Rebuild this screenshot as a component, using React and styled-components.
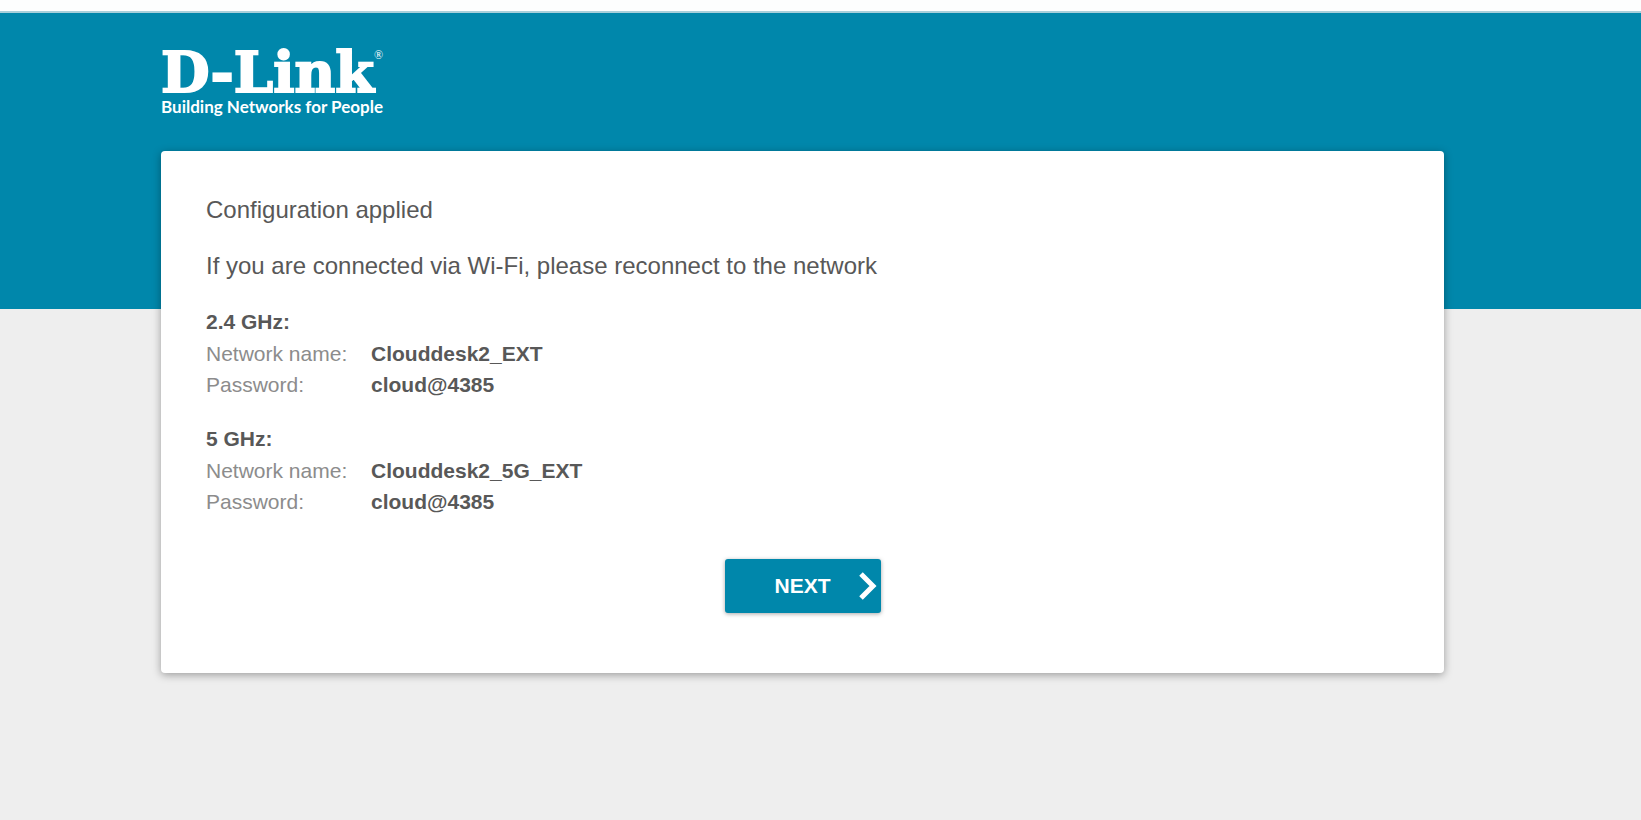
import React from "react";
import styled, { createGlobalStyle } from "styled-components";

const GlobalStyle = createGlobalStyle`
  *, *::before, *::after { box-sizing: border-box; }
  body {
    margin: 0;
    background: #eeeeee;
    color: #585858;
    font-family: "Liberation Sans", Arial, sans-serif;
  }
`;

const Page = styled.div`
  min-height: 100vh;
  border-top: 11px solid #fdfefe;
  background: linear-gradient(#0087ab, #0087ab) top / 100% 298px no-repeat #eeeeee;
`;

const Edge = styled.div`
  height: 2px;
  background: #a9d0db;
`;

const Content = styled.div`
  padding: 34px 197px 0 161px;
`;

const Header = styled.header`
  height: 104px;
`;

const Logo = styled.a`
  display: inline-flex;
  flex-direction: column;
  color: #ffffff;
  text-decoration: none;
  white-space: nowrap;
`;

const Wordmark = styled.span`
  display: flex;
  align-items: flex-start;
  height: 50px;
  font: bold 56px/50px "DejaVu Serif", serif;
  -webkit-text-stroke: 2px #ffffff;
`;

const Registered = styled.sup`
  font: 12px/16px "Liberation Serif", serif;
  -webkit-text-stroke: 0;
`;

const Tagline = styled.span`
  font: bold 17px/20px Lato, "Open Sans", sans-serif;
`;

const Card = styled.main`
  padding: 43px 45px 60px;
  background: #ffffff;
  border-radius: 4px;
  box-shadow: 0 2px 8px rgba(0, 0, 0, 0.35);
`;

const Message = styled.p`
  margin: 0 0 24px;
  font-size: 24px;
  line-height: 32px;
`;

const Network = styled.section`
  margin-bottom: 23px;
  font-size: 21px;
`;

const Band = styled.h2`
  margin: 0;
  font-size: 21px;
  line-height: 32px;
`;

const Details = styled.dl`
  display: grid;
  grid-template-columns: 165px 1fr;
  margin: 0;
  line-height: 31px;
`;

const Term = styled.dt`
  color: #8c8c8c;
`;

const Value = styled.dd`
  margin: 0;
  font-weight: bold;
`;

const Actions = styled.div`
  display: flex;
  justify-content: center;
  padding-top: 19px;
`;

const NextButton = styled.button`
  display: grid;
  grid-template-columns: 1fr auto 1fr;
  align-items: center;
  width: 156px;
  height: 54px;
  padding: 0 4px;
  border: 0;
  border-radius: 3px;
  background: #0087ab;
  box-shadow: 0 1px 4px rgba(0, 0, 0, 0.35);
  color: #ffffff;
  font: bold 21px/24px "Liberation Sans", Arial, sans-serif;
  cursor: pointer;
`;

const Label = styled.span`
  grid-column: 2;
`;

const Chevron = styled.svg`
  justify-self: end;
`;

const networks = [
  { band: "2.4 GHz:", name: "Clouddesk2_EXT", password: "cloud@4385" },
  { band: "5 GHz:", name: "Clouddesk2_5G_EXT", password: "cloud@4385" },
];

export default function App() {
  return (
    <Page>
      <GlobalStyle />
      <Edge />
      <Content>
        <Header>
          <Logo href="#">
            <Wordmark>
              D-Link<Registered>®</Registered>
            </Wordmark>
            <Tagline>Building Networks for People</Tagline>
          </Logo>
        </Header>
        <Card>
          <Message>Configuration applied</Message>
          <Message>If you are connected via Wi-Fi, please reconnect to the network</Message>
          {networks.map((n) => (
            <Network key={n.band}>
              <Band>{n.band}</Band>
              <Details>
                <Term>Network name:</Term>
                <Value>{n.name}</Value>
                <Term>Password:</Term>
                <Value>{n.password}</Value>
              </Details>
            </Network>
          ))}
          <Actions>
            <NextButton type="button">
              <Label>NEXT</Label>
              <Chevron width="18" height="28" viewBox="0 0 18 28" aria-hidden="true">
                <path d="M2 2 L14 14 L2 26" fill="none" stroke="#ffffff" strokeWidth="5" />
              </Chevron>
            </NextButton>
          </Actions>
        </Card>
      </Content>
    </Page>
  );
}
